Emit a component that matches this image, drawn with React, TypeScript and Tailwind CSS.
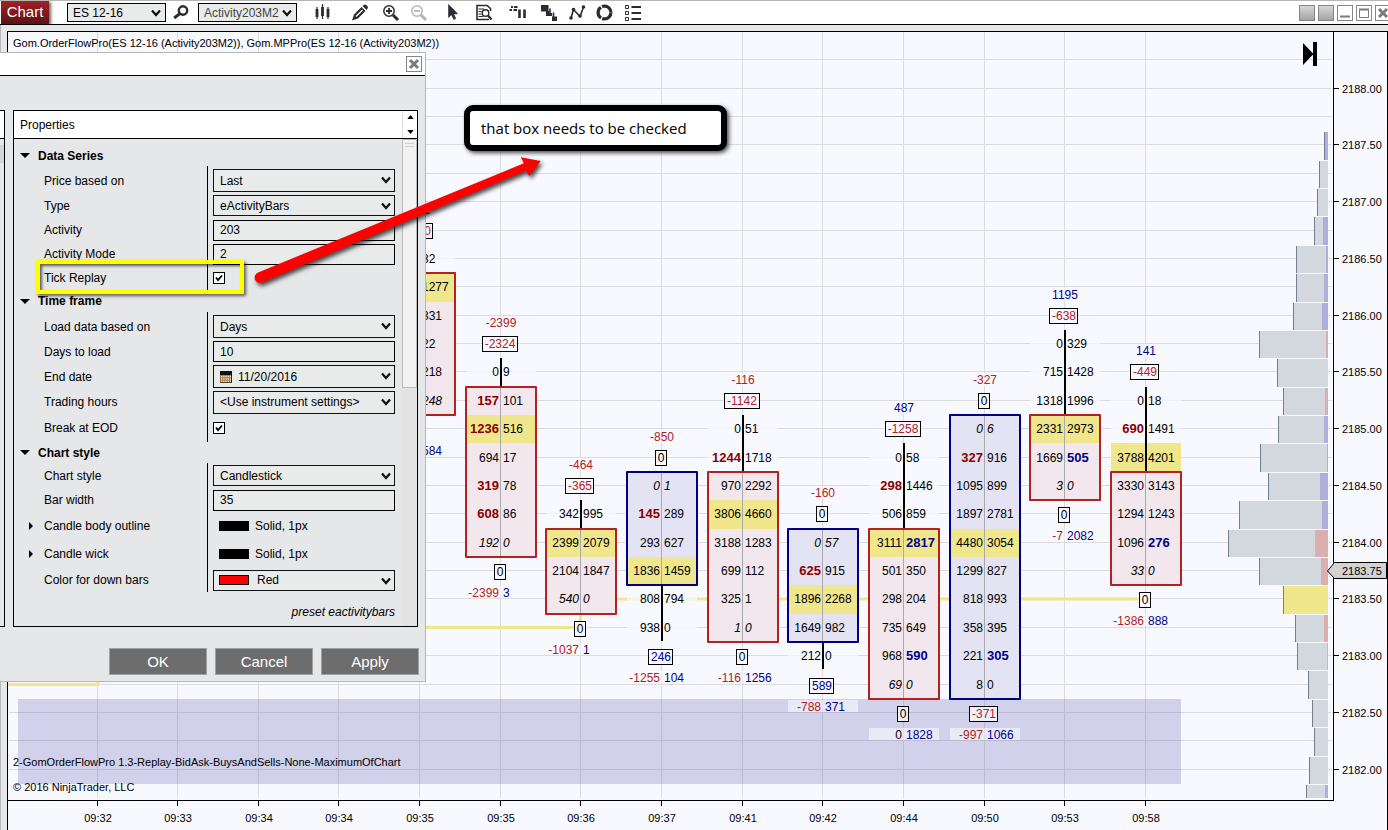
import type { ReactNode } from 'react'
import { clsx } from 'clsx'

// ---------- chart data ----------

type Cell = { v: string; bold?: boolean; italic?: boolean }
type Row = [bid: string, ask: string]

interface Bar {
  x: number
  time: string
  delta: string
  highDelta: string
  first: number // row index of the highest price, 0 = 2188.00
  rows: Row[]
  body: [from: number, to: number]
  poc: number
  up?: boolean
  lowDelta: string
  sums: Row
}

// "b" prefix = imbalance (bold), "i" prefix = unfinished auction (italic)
const BARS: Bar[] = [
  {
    x: 419, time: '09:35', delta: '301', highDelta: '-450', first: 6, body: [7, 11], poc: 7,
    rows: [['', '32'], ['', '1277'], ['', '331'], ['', '22'], ['', '218'], ['', 'i248']],
    lowDelta: '0', sums: ['', '584'],
  },
  {
    x: 500, time: '09:35', delta: '-2399', highDelta: '-2324', first: 10, body: [11, 16], poc: 12,
    rows: [['0', '9'], ['b157', '101'], ['b1236', '516'], ['694', '17'], ['b319', '78'], ['b608', '86'], ['i192', 'i0']],
    lowDelta: '0', sums: ['-2399', '3'],
  },
  {
    x: 580, time: '09:36', delta: '-464', highDelta: '-365', first: 15, body: [16, 18], poc: 16,
    rows: [['342', '995'], ['2399', '2079'], ['2104', '1847'], ['i540', 'i0']],
    lowDelta: '0', sums: ['-1037', '1'],
  },
  {
    x: 661, time: '09:37', delta: '-850', highDelta: '0', first: 14, body: [14, 17], poc: 17, up: true,
    rows: [['i0', 'i1'], ['b145', '289'], ['293', '627'], ['1836', '1459'], ['808', '794'], ['938', '0']],
    lowDelta: '246', sums: ['-1255', '104'],
  },
  {
    x: 742, time: '09:41', delta: '-116', highDelta: '-1142', first: 12, body: [14, 19], poc: 15,
    rows: [['0', '51'], ['b1244', '1718'], ['970', '2292'], ['3806', '4660'], ['3188', '1283'], ['699', '112'], ['325', '1'], ['i1', 'i0']],
    lowDelta: '0', sums: ['-116', '1256'],
  },
  {
    x: 822, time: '09:42', delta: '-160', highDelta: '0', first: 16, body: [16, 19], poc: 18, up: true,
    rows: [['i0', 'i57'], ['b625', '915'], ['1896', '2268'], ['1649', '982'], ['212', '0']],
    lowDelta: '589', sums: ['-788', '371'],
  },
  {
    x: 903, time: '09:44', delta: '487', highDelta: '-1258', first: 13, body: [16, 21], poc: 16,
    rows: [['0', '58'], ['b298', '1446'], ['506', '859'], ['3111', 'b2817'], ['501', '350'], ['298', '204'], ['735', '649'], ['968', 'b590'], ['i69', 'i0']],
    lowDelta: '0', sums: ['0', '1828'],
  },
  {
    x: 984, time: '09:50', delta: '-327', highDelta: '0', first: 12, body: [12, 21], poc: 16, up: true,
    rows: [['i0', 'i6'], ['b327', '916'], ['1095', '899'], ['1897', '2781'], ['4480', '3054'], ['1299', '827'], ['818', '993'], ['358', '395'], ['221', 'b305'], ['8', '0']],
    lowDelta: '-371', sums: ['-997', '1066'],
  },
  {
    x: 1064, time: '09:53', delta: '1195', highDelta: '-638', first: 9, body: [12, 14], poc: 12,
    rows: [['0', '329'], ['715', '1428'], ['1318', '1996'], ['2331', '2973'], ['1669', 'b505'], ['i3', 'i0']],
    lowDelta: '0', sums: ['-7', '2082'],
  },
  {
    x: 1145, time: '09:58', delta: '141', highDelta: '-449', first: 11, body: [14, 17], poc: 13,
    rows: [['0', '18'], ['b690', '1491'], ['3788', '4201'], ['3330', '3143'], ['1294', '1243'], ['1096', 'b276'], ['i33', 'i0']],
    lowDelta: '0', sums: ['-1386', '888'],
  },
]

const EARLY_TIMES = [
  { x: 97, time: '09:32' },
  { x: 177, time: '09:33' },
  { x: 258, time: '09:34' },
  { x: 338, time: '09:34' },
]

// volume profile, from 2187.50 downwards: left edge, start of the delta part, its colour
const BLUE = '#b0aedb'
const RED = '#dbafaf'
const PROFILE: [left: number, delta?: number, color?: string][] = [
  [1324, 1325, BLUE], [1319], [1317], [1314, 1323, BLUE], [1296, 1326, BLUE], [1296, 1324, BLUE],
  [1293, 1322, BLUE], [1259, 1326, RED], [1277], [1283, 1325, RED], [1278, 1324, BLUE], [1260, 1327, BLUE],
  [1268, 1320, BLUE], [1239, 1322, BLUE], [1228, 1315, RED], [1259, 1321, RED], [1283, 1284, '#f0e68c'],
  [1295, 1324, RED], [1297, 1327, RED], [1308], [1312], [1314], [1309], [1306, 1325, BLUE],
]

const STEP = 28.375
const rowY = (i: number) => Math.floor(88.2 + i * STEP)
const edgeY = (i: number) => Math.floor(88.2 + (i - 0.5) * STEP) + 1

function parse(s: string): Cell {
  if (s.startsWith('b')) return { v: s.slice(1), bold: true }
  if (s.startsWith('i')) return { v: s.slice(1), italic: true }
  return { v: s }
}

function signClass(v: string) {
  if (v === '0') return 'fill-black'
  return v.startsWith('-') ? 'fill-[#b22222]' : 'fill-[#00008b]'
}

function CellText({ x, y, value, side }: { x: number; y: number; value: string; side: 'bid' | 'ask' }) {
  const c = parse(value)
  return (
    <text
      x={side === 'bid' ? x - 1 : x + 3}
      y={y}
      textAnchor={side === 'bid' ? 'end' : 'start'}
      className={clsx(
        c.bold ? 'text-[13px] font-bold' : 'text-[12px]',
        c.italic && 'italic',
        !c.bold && 'fill-black',
        c.bold && (side === 'bid' ? 'fill-[#8b0000]' : 'fill-[#00008b]'),
      )}
    >
      {c.v}
    </text>
  )
}

function DeltaBox({ x, y, value }: { x: number; y: number; value: string }) {
  const digits = value.replace('-', '').length
  const w = Math.round(digits * 6.67 + (value.startsWith('-') ? 4 : 0)) + 4
  const left = x - 1 - Math.floor(w / 2)
  return (
    <g>
      <rect x={left + 0.5} y={y - 7.5} width={w} height={15} fill="#f8f8ff" fillOpacity={0.8} stroke="black" />
      <text x={x} y={y + 4} textAnchor="middle" className={clsx('text-[12px]', signClass(value))}>
        {value}
      </text>
    </g>
  )
}

function Footprint({ bar }: { bar: Bar }) {
  const { x, first, body } = bar
  const last = first + bar.rows.length - 1
  const top = edgeY(body[0])
  const bottom = edgeY(body[1] + 1)
  const highY = rowY(first - 1)
  const lowY = rowY(last + 1) + 1

  return (
    <g>
      {bar.rows.map((_, n) => (
        <rect key={n} x={x - 34} y={rowY(first + n) - 6} width={70} height={13} fill="#f8f8ff" fillOpacity={0.7} />
      ))}
      <rect x={x - 34} y={top} width={70} height={bottom - top} fill={bar.up ? '#e4e3f3' : '#f2e7ec'} />
      <rect x={x - 34} y={edgeY(bar.poc)} width={70} height={edgeY(bar.poc + 1) - edgeY(bar.poc)} fill="#f0e68c" />
      <rect x={x} y={top} width={1} height={bottom - top} fill="#a9a9a9" />
      <rect
        x={x - 34}
        y={top}
        width={70}
        height={bottom - top}
        fill="none"
        stroke={bar.up ? '#000080' : '#b22222'}
        strokeWidth={2}
        strokeLinejoin="round"
      />
      {first < body[0] && <rect x={x} y={edgeY(first)} width={2} height={top - edgeY(first) - 1} fill="black" />}
      {last > body[1] && <rect x={x} y={bottom + 1} width={2} height={edgeY(last + 1) - bottom - 2} fill="black" />}

      {bar.rows.map(([bid, ask], n) => (
        <g key={n}>
          <CellText x={x} y={rowY(first + n) + 5} value={bid} side="bid" />
          <CellText x={x} y={rowY(first + n) + 5} value={ask} side="ask" />
        </g>
      ))}

      <rect x={x - 15} y={highY - 27} width={31} height={13} fill="#f8f8ff" fillOpacity={0.7} />
      <text x={x + 1} y={highY - 16} textAnchor="middle" className={clsx('text-[12px]', signClass(bar.delta))}>
        {bar.delta}
      </text>
      <DeltaBox x={x} y={highY + 1} value={bar.highDelta} />
      <DeltaBox x={x} y={lowY + 1} value={bar.lowDelta} />
      <rect x={x - 34} y={lowY + 15} width={70} height={12} fill="#f8f8ff" fillOpacity={0.6} />
      <text x={x - 1} y={lowY + 26} textAnchor="end" className={clsx('text-[12px]', signClass(bar.sums[0]))}>
        {bar.sums[0]}
      </text>
      <text x={x + 3} y={lowY + 26} className={clsx('text-[12px]', signClass(bar.sums[1]))}>
        {bar.sums[1]}
      </text>
    </g>
  )
}

function OrderFlowChart() {
  const times = [...EARLY_TIMES, ...BARS]
  const gridRows = Array.from({ length: 26 }, (_, i) => i - 1)
  const priceRows = Array.from({ length: 13 }, (_, i) => i * 2)

  return (
    <svg viewBox="8 32 1379 798" className="block w-full" role="img" aria-label="ES 12-16 order flow chart">
      {gridRows.map((i) => (
        <rect key={i} x={9} y={rowY(i)} width={1323} height={1} fill="#dcdcdc" />
      ))}
      {times.map((t) => (
        <rect key={t.x} x={t.x} y={32} width={1} height={766} fill="#dcdcdc" />
      ))}
      <rect x={18} y={699} width={1163} height={85} fill="#3a359b" fillOpacity={0.2} />
      <path d="M8 684.5H98V627.5H580.5V599H1145" fill="none" stroke="#f0e68c" strokeWidth={3} />

      {BARS.map((bar) => (
        <Footprint key={bar.x} bar={bar} />
      ))}

      {PROFILE.map(([left, delta, color], n) => {
        const y = edgeY(n + 2) + 1
        const h = Math.min(edgeY(n + 3), 798) - y
        return (
          <g key={n}>
            <rect x={left} y={y} width={1328 - left} height={h} fill="#d3d8de" />
            {delta && <rect x={delta} y={y} width={1328 - delta} height={h} fill={color} />}
            <rect x={left} y={y} width={1} height={h} fill="#708090" />
          </g>
        )
      })}

      {/* axes */}
      <rect x={1333} y={32} width={1} height={769} fill="black" />
      <rect x={8} y={800} width={1326} height={1} fill="black" />
      {times.map((t) => (
        <g key={t.x}>
          <rect x={t.x} y={801} width={1} height={5} fill="black" />
          <text x={t.x + 1} y={822} textAnchor="middle" className="text-[11px]">
            {t.time}
          </text>
        </g>
      ))}
      {priceRows.map((i) => (
        <g key={i}>
          <rect x={1334} y={rowY(i)} width={5} height={1} fill="black" />
          <text x={1342} y={rowY(i) + 5} className="text-[11px]">
            {(2188 - i / 4).toFixed(2)}
          </text>
        </g>
      ))}
      <path d="M1327.5 571L1334.5 562.5H1386.5V578.5H1334.5Z" fill="#d3d3d3" stroke="black" />
      <text x={1342} y={575} className="text-[11px]">
        2183.75
      </text>

      <path d="M1303 43L1313.5 54L1303 65ZM1313 42H1317V66H1313Z" fill="black" />

      <text x={13} y={47} className="text-[11px]">
        Gom.OrderFlowPro(ES 12-16 (Activity203M2)), Gom.MPPro(ES 12-16 (Activity203M2))
      </text>
      <text x={13} y={766} className="text-[11px]">
        2-GomOrderFlowPro 1.3-Replay-BidAsk-BuysAndSells-None-MaximumOfChart
      </text>
      <text x={13} y={791} className="text-[11px]">
        © 2016 NinjaTrader, LLC
      </text>
    </svg>
  )
}

// ---------- toolbar ----------

function Chevron({ className }: { className?: string }) {
  return (
    <svg viewBox="0 0 10 8" className={clsx('pointer-events-none absolute h-2 w-[10px]', className)}>
      <path d="M1 1.5L5 6L9 1.5" fill="none" stroke="#111" strokeWidth={2.2} />
    </svg>
  )
}

function ToolSelect({ label, value, className }: { label: string; value: string; className: string }) {
  return (
    <div className="relative">
      <select
        aria-label={label}
        className={clsx('block h-[19px] w-[99px] appearance-none border border-black bg-[#e8ebe9] pl-[5px] text-[12px]', className)}
      >
        <option>{value}</option>
      </select>
      <Chevron className="top-[6px] right-[5px]" />
    </div>
  )
}

function Tool({ label, className, children }: { label: string; className?: string; children: ReactNode }) {
  return (
    <button type="button" aria-label={label} className={clsx('h-[18px] w-[18px] shrink-0', className)}>
      <svg viewBox="0 0 18 18" className="block h-[18px] w-[18px]" fill="none" stroke="#2b2b33">
        {children}
      </svg>
    </button>
  )
}

function WindowButton({ label, filled, children }: { label: string; filled?: boolean; children?: ReactNode }) {
  return (
    <button
      type="button"
      aria-label={label}
      className={clsx(
        'h-4 w-4 shrink-0 border border-[#858585]',
        filled ? 'bg-linear-to-b from-[#d8d6d7] to-[#a7a3a4]' : 'bg-white',
      )}
    >
      <svg viewBox="0 0 14 14" className="block h-[14px] w-[14px]" fill="none" stroke="#7b7b7b">
        {children}
      </svg>
    </button>
  )
}

function Toolbar() {
  return (
    <header className="flex h-[25px] items-center overflow-hidden border-t border-b border-t-[#b7b7b7] border-b-black bg-white">
      <div className="ml-px flex h-full w-12 shrink-0 items-center justify-center bg-linear-to-b from-[#a32126] to-[#5c1216] text-[15px] text-white shadow-[2px_1px_3px_rgba(0,0,0,0.6)]">
        Chart
      </div>
      <div className="ml-[18px] flex items-center">
        <ToolSelect label="Instrument" value="ES 12-16" className="text-black" />
        <Tool label="Search instrument" className="mr-[7px] ml-[7px]">
          <circle cx="10" cy="6.5" r="4.2" strokeWidth="2.4" />
          <path d="M6.8 9.6L1.2 14" strokeWidth="3" />
        </Tool>
        <ToolSelect label="Interval" value="Activity203M2" className="text-[#444]" />
      </div>

      <Tool label="Chart style" className="ml-[17px]">
        <path d="M3 3V15M8.5 0V15M14 3V15" strokeWidth="1.2" />
        <path d="M3 5V13M8.5 3V12M14 5V13" strokeWidth="2.8" />
      </Tool>
      <Tool label="Drawing tools" className="ml-[19px]">
        <path d="M1 16.5L3 10.5L10.5 3L14.5 7L7 14.5Z" fill="#2b2b33" stroke="none" />
        <path d="M5 12.5L11.5 6" stroke="white" strokeWidth="1.3" />
        <path d="M11.5 2L13.5 0.5Q16.5 0.8 17 3.8L15.5 6Z" fill="#2b2b33" stroke="none" />
      </Tool>
      <Tool label="Zoom in" className="ml-[13px]">
        <circle cx="7" cy="7" r="5.2" strokeWidth="1.5" />
        <path d="M4 7H10M7 4V10" strokeWidth="1.8" />
        <path d="M11 11L16 16" strokeWidth="3" />
      </Tool>
      <Tool label="Zoom out" className="ml-[10px]">
        <g stroke="#b5b5b5">
          <circle cx="7" cy="7" r="5.2" strokeWidth="1.5" />
          <path d="M4 7H10" strokeWidth="1.8" />
          <path d="M11 11L16 16" strokeWidth="3" />
        </g>
      </Tool>
      <Tool label="Cursor" className="ml-4">
        <path d="M4.5 0.5V13.5L7.5 10.8L9.8 15.5L11.8 14.5L9.6 10.1L13.6 9.8Z" fill="#2b2b33" strokeWidth="0.6" />
      </Tool>
      <Tool label="Data box" className="ml-[13px]">
        <path d="M15.5 7V4.5L12 1.5H2V15.5H14" strokeWidth="1.6" />
        <path d="M3.5 5H9M3.5 7.5H6.5M3.5 10H6.5M3.5 12.5H8" strokeWidth="1.1" />
        <circle cx="10.5" cy="9" r="3.3" strokeWidth="1.4" />
        <path d="M13 11.5L16.5 15.5" strokeWidth="2.2" />
      </Tool>
      <Tool label="Chart trader" className="ml-4">
        <path d="M2 3H4M5 3H8.5M0.5 6H3M4.5 6H8" strokeWidth="2" />
        <path d="M10.5 5.5V14M15.5 5.5V14" strokeWidth="2.6" />
      </Tool>
      <Tool label="Data series" className="ml-[13px]">
        <path d="M1 1H8.5V7.5H1ZM6 7H9.5V9H12V12H6ZM12 12.5H17V17H12Z" fill="#2b2b33" stroke="none" />
        <path d="M10 4.5V9M13.5 8.5V13" strokeWidth="1.6" />
      </Tool>
      <Tool label="Indicators" className="ml-[10px]">
        <path d="M3 14L5.5 5.5L12 12.5L15.5 3" strokeWidth="1.6" />
        <g fill="#2b2b33" stroke="none">
          <circle cx="3" cy="14" r="1.8" />
          <circle cx="5.5" cy="5.5" r="1.8" />
          <circle cx="12" cy="12" r="1.8" />
          <circle cx="15.5" cy="3" r="1.8" />
        </g>
      </Tool>
      <Tool label="Strategies" className="ml-[10px]">
        <circle cx="8.5" cy="8.5" r="6.4" strokeWidth="3.2" strokeDasharray="12.2 1.2" />
      </Tool>
      <Tool label="Properties" className="ml-[10px]">
        <path d="M1.5 1.5H4.5V4.5H1.5ZM1.5 7.5H4.5V10.5H1.5ZM1.5 13.5H4.5V16.5H1.5Z" />
        <path d="M7.5 3H17M7.5 9H17M7.5 15H17" strokeWidth="1.8" />
      </Tool>

      <div className="-mr-[3px] ml-auto flex gap-[3px] pt-px">
        <WindowButton label="Link instrument" filled />
        <WindowButton label="Link interval" filled />
        <WindowButton label="Minimize">
          <path d="M2 10.5H12" strokeWidth="2" />
        </WindowButton>
        <WindowButton label="Maximize">
          <path d="M2.5 3.5H11.5V11.5H2.5Z" />
          <path d="M2 3.5H12" strokeWidth="2" />
        </WindowButton>
        <WindowButton label="Close window">
          <path d="M3 3L11 11M11 3L3 11" strokeWidth="3" />
        </WindowButton>
      </div>
    </header>
  )
}

// ---------- data series dialog ----------

type Field = {
  label: string
  value: string
  kind: 'select' | 'input' | 'check' | 'line' | 'date' | 'color'
  row: string
  control?: string
}

const SECTIONS: { title: string; header: string; fields: Field[]; box: string }[] = [
  {
    title: 'Data Series',
    header: 'h-[27px] pt-[6px]',
    box: 'pt-[2px]',
    fields: [
      { label: 'Price based on', value: 'Last', kind: 'select', row: 'h-[25px]', control: 'h-[23px]' },
      { label: 'Type', value: 'eActivityBars', kind: 'select', row: 'h-[25px]', control: 'h-[21px]' },
      { label: 'Activity', value: '203', kind: 'input', row: 'h-6' },
      { label: 'Activity Mode', value: '2', kind: 'input', row: 'h-6' },
      { label: 'Tick Replay', value: '', kind: 'check', row: 'h-6' },
    ],
  },
  {
    title: 'Time frame',
    header: 'h-[22px]',
    box: 'py-[2px]',
    fields: [
      { label: 'Load data based on', value: 'Days', kind: 'select', row: 'h-[25px]', control: 'h-[23px]' },
      { label: 'Days to load', value: '10', kind: 'input', row: 'h-[25px]' },
      { label: 'End date', value: '11/20/2016', kind: 'date', row: 'h-[25px]', control: 'h-[23px]' },
      { label: 'Trading hours', value: '<Use instrument settings>', kind: 'select', row: 'h-[26px]', control: 'h-[23px]' },
      { label: 'Break at EOD', value: '', kind: 'check', row: 'h-[25px]' },
    ],
  },
  {
    title: 'Chart style',
    header: 'h-[21px]',
    box: '',
    fields: [
      { label: 'Chart style', value: 'Candlestick', kind: 'select', row: 'h-[25px]', control: 'h-[21px]' },
      { label: 'Bar width', value: '35', kind: 'input', row: 'h-6' },
      { label: 'Candle body outline', value: 'Solid, 1px', kind: 'line', row: 'h-7' },
      { label: 'Candle wick', value: 'Solid, 1px', kind: 'line', row: 'h-7' },
      { label: 'Color for down bars', value: 'Red', kind: 'color', row: 'h-6', control: 'h-[21px]' },
    ],
  },
]

function Control({ field, id }: { field: Field; id: string }) {
  switch (field.kind) {
    case 'input':
      return (
        <input id={id} type="text" defaultValue={field.value} className="h-[21px] w-full border border-black bg-[#e8ebe9] px-[6px]" />
      )
    case 'check':
      return (
        <div className="relative h-3 w-3">
          <input id={id} type="checkbox" defaultChecked className="peer block h-3 w-3 appearance-none border border-black bg-white" />
          <svg viewBox="0 0 12 12" className="pointer-events-none absolute inset-0 hidden h-3 w-3 peer-checked:block">
            <path d="M3 5.5L5 8L9 3.5" fill="none" stroke="black" strokeWidth={1.8} />
          </svg>
        </div>
      )
    case 'line':
      return (
        <div id={id} className="flex items-center gap-[6px] pl-[6px]">
          <span className="h-[10px] w-[30px] bg-black" />
          {field.value}
        </div>
      )
    default:
      return (
        <div className="relative w-full">
          {field.kind === 'color' && (
            <span className="pointer-events-none absolute top-[5px] left-[6px] h-[10px] w-[30px] border border-black bg-[#ff0000]" />
          )}
          {field.kind === 'date' && (
            <svg viewBox="0 0 12 12" className="pointer-events-none absolute top-[6px] left-[7px] h-3 w-3">
              <rect width="12" height="12" fill="#a8702f" />
              <rect width="12" height="4" fill="#111" />
              <path d="M1 5.5H11M1 8H11M1 10.5H11" stroke="#f3e6d2" strokeWidth="1.5" strokeDasharray="1.4 0.8" />
              <path d="M11.5 4V12M0 11.8H12" stroke="#222" />
            </svg>
          )}
          <select
            id={id}
            className={clsx(
              'block w-full appearance-none border border-[#111] bg-[#e8ebe9]',
              field.control,
              field.kind === 'date' && 'pl-6',
              field.kind === 'color' && 'pl-[43px]',
              field.kind === 'select' && 'pl-[6px]',
            )}
          >
            <option>{field.value}</option>
          </select>
          <Chevron className="top-[7px] right-1" />
        </div>
      )
  }
}

function Properties() {
  return (
    <section className="ml-2 flex grow flex-col border border-black">
      <div className="flex h-[28px] border-b border-black bg-white">
        <h2 className="grow self-center pl-[6px]">Properties</h2>
        <div className="flex w-[15px] flex-col justify-between border-l border-[#ddd] py-1">
          <button type="button" aria-label="Scroll up" className="flex justify-center">
            <svg viewBox="0 0 8 5" className="h-1 w-[7px]"><path d="M0 5L4 0L8 5Z" /></svg>
          </button>
          <button type="button" aria-label="Scroll down" className="flex justify-center">
            <svg viewBox="0 0 8 5" className="h-1 w-[7px]"><path d="M0 0L4 5L8 0Z" /></svg>
          </button>
        </div>
      </div>
      <div className="flex grow">
        <div className="grow pr-[7px]">
          {SECTIONS.map((s) => (
            <div key={s.title}>
              <h3 className={clsx('flex items-center pl-[6px] font-bold', s.header)}>
                <svg viewBox="0 0 10 5" className="mr-2 h-[5px] w-[10px]"><path d="M0 0H10L5 5Z" /></svg>
                {s.title}
              </h3>
              <div className="flex">
                <div className={clsx('w-[194px] border-r border-black', s.box)}>
                  {s.fields.map((f) => (
                    <label key={f.label} htmlFor={`${s.title}-${f.label}`.replaceAll(' ', '-')} className={clsx('flex items-center pl-[15px]', f.row)}>
                      <span className="flex w-[15px]">
                        {f.kind === 'line' && <svg viewBox="0 0 4 8" className="h-2 w-1"><path d="M0 0L4 4L0 8Z" /></svg>}
                      </span>
                      {f.label}
                    </label>
                  ))}
                </div>
                <div className={clsx('grow pl-[5px]', s.box)}>
                  {s.fields.map((f) => (
                    <div key={f.label} className={clsx('flex items-center', f.row)}>
                      <Control field={f} id={`${s.title}-${f.label}`.replaceAll(' ', '-')} />
                    </div>
                  ))}
                </div>
              </div>
            </div>
          ))}
          <p className="pt-[11px] pb-[5px] text-right italic">preset eactivitybars</p>
        </div>
        <div className="w-[15px] shrink-0 bg-[#e3e3e3]">
          <div className="flex h-[249px] flex-col items-center gap-[2px] border border-[#bbb] bg-[#f2f2f2] pt-[3px]">
            <span className="h-px w-[9px] bg-[#d0d0d0]" />
            <span className="h-px w-[9px] bg-[#d0d0d0]" />
          </div>
        </div>
      </div>
    </section>
  )
}

function DataSeriesDialog() {
  return (
    <div role="dialog" aria-label="Data Series" className="absolute top-[52px] left-0 w-[426px] border border-l-0 border-[#b7b7b7] bg-[#e6e7e9] text-[12px]">
      <div className="flex h-[23px] items-center justify-end border-b border-black bg-white pr-[3px]">
        <WindowButton label="Close dialog">
          <path d="M3 3L11 11M11 3L3 11" strokeWidth="3" />
        </WindowButton>
      </div>
      <div className="flex pt-[34px] pr-[7px]">
        <div className="w-[5px] border-y border-r border-black">
          <div className="h-[28px] border-b border-black bg-white" />
          <div className="mt-[6px] h-[18px] bg-[#d5d5d5]" />
        </div>
        <Properties />
      </div>
      <div className="flex justify-end gap-2 pt-[21px] pr-[6px] pb-[6px] text-[15px] text-white">
        {['OK', 'Cancel', 'Apply'].map((t) => (
          <button key={t} type="button" className="h-[27px] w-[98px] border border-[#a0a0a0] bg-[#6d6d6d] leading-none">
            {t}
          </button>
        ))}
      </div>
    </div>
  )
}

// ---------- annotations ----------

function Annotations() {
  return (
    <>
      <div className="pointer-events-none absolute top-[260px] left-[36px] h-[34px] w-[208px] border-4 border-[#ffff00] shadow-[2px_2px_3px_rgba(0,0,0,0.6),inset_2px_2px_3px_rgba(0,0,0,0.6)]" />
      <div className="absolute top-[105px] left-[464px] flex h-[46px] w-[263px] items-center rounded-[9px] border-[6px] border-black bg-white pl-[11px] font-['Open_Sans','Noto_Sans',sans-serif] text-[15px] shadow-[2px_2px_4px_rgba(0,0,0,0.7)]">
        that box needs to be checked
      </div>
      <svg
        viewBox="0 0 300 135"
        className="pointer-events-none absolute top-[150px] left-[250px] h-[135px] w-[300px] drop-shadow-[2px_3px_2px_rgba(0,0,0,0.7)]"
      >
        <path
          d="M8.2 122.4L274 13.3L270.7 7.3L290.7 11L279.3 26L276 20.7L12 132.6A5.4 5.4 0 0 1 8.2 122.4Z"
          fill="#ff0000"
        />
      </svg>
    </>
  )
}

export default function App() {
  return (
    <div className="relative min-h-screen overflow-hidden bg-[#e6e7e9] font-['Liberation_Sans',Arial,sans-serif] text-black">
      <Toolbar />
      <main className="border-l border-[#b7b7b7] pt-[6px] pl-[6px]">
        <div className="border-t border-r border-l border-black bg-[#f8f8ff]">
          <OrderFlowChart />
        </div>
      </main>
      <DataSeriesDialog />
      <Annotations />
    </div>
  )
}
